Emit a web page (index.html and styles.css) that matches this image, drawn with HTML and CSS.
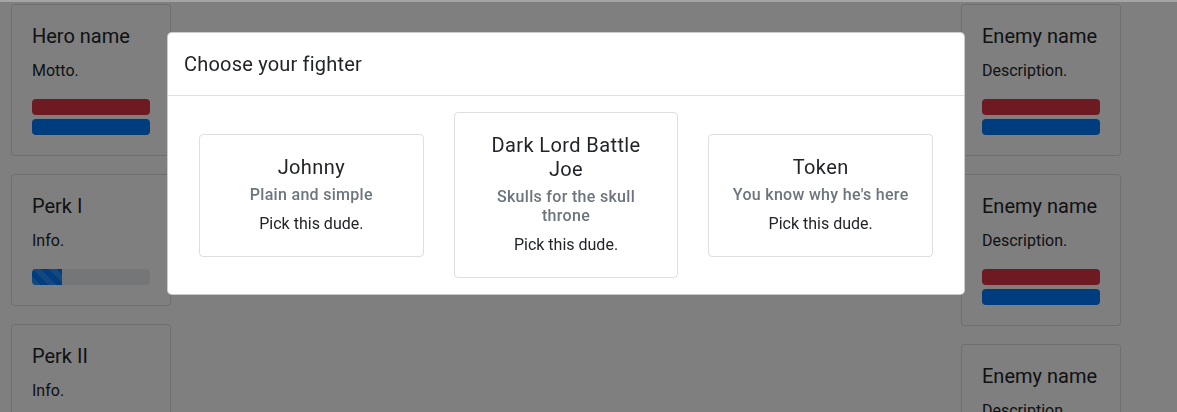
FILE: index.html
```html
<!DOCTYPE html>
<html lang="en">
<head>
<meta charset="utf-8">
<title>Choose your fighter</title>
<link rel="stylesheet" href="styles.css">
</head>
<body>
<div class="topline"></div>
<div class="page">
  <div class="side">
    <div class="card">
      <h5 class="card-title">Hero name</h5>
      <p class="card-text">Motto.</p>
      <div class="bar bar-red"></div>
      <div class="bar bar-blue"></div>
    </div>
    <div class="card">
      <h5 class="card-title">Perk I</h5>
      <p class="card-text">Info.</p>
      <div class="progress"><div class="progress-bar striped" style="width:25%"></div></div>
    </div>
    <div class="card">
      <h5 class="card-title">Perk II</h5>
      <p class="card-text">Info.</p>
      <div class="progress"><div class="progress-bar striped" style="width:25%"></div></div>
    </div>
  </div>
  <div class="middle"></div>
  <div class="side">
    <div class="card">
      <h5 class="card-title">Enemy name</h5>
      <p class="card-text">Description.</p>
      <div class="bar bar-red"></div>
      <div class="bar bar-blue"></div>
    </div>
    <div class="card">
      <h5 class="card-title">Enemy name</h5>
      <p class="card-text">Description.</p>
      <div class="bar bar-red"></div>
      <div class="bar bar-blue"></div>
    </div>
    <div class="card">
      <h5 class="card-title">Enemy name</h5>
      <p class="card-text">Description.</p>
      <div class="bar bar-red"></div>
      <div class="bar bar-blue"></div>
    </div>
  </div>
</div>
<div class="backdrop"></div>
<div class="modal">
  <div class="modal-header">
    <h5 class="modal-title">Choose your fighter</h5>
  </div>
  <div class="modal-body">
    <div class="fighter">
      <h5 class="fighter-title">Johnny</h5>
      <h6 class="fighter-sub">Plain and simple</h6>
      <p class="fighter-text">Pick this dude.</p>
    </div>
    <div class="fighter">
      <h5 class="fighter-title">Dark Lord Battle Joe</h5>
      <h6 class="fighter-sub">Skulls for the skull throne</h6>
      <p class="fighter-text">Pick this dude.</p>
    </div>
    <div class="fighter">
      <h5 class="fighter-title">Token</h5>
      <h6 class="fighter-sub">You know why he's here</h6>
      <p class="fighter-text">Pick this dude.</p>
    </div>
  </div>
</div>
</body>
</html>
```
FILE: styles.css
```css
html, body {
  margin: 0;
  height: 100%;
  overflow: hidden;
}
body {
  font-family: Roboto, "Liberation Sans", sans-serif;
  font-size: 16px;
  line-height: 1.5;
  color: #212529;
  background: #fff;
}
.topline {
  height: 2px;
  background: #a4a4a4;
  position: relative;
  z-index: 1060;
}
.page {
  display: grid;
  grid-template-columns: 160px 1fr 160px;
  padding: 2px 56px 0 11px;
}
.side {
  display: flex;
  flex-direction: column;
  gap: 18px;
}
.card {
  border: 1px solid rgba(0, 0, 0, 0.125);
  border-radius: 4px;
  padding: 20px;
  background: #fff;
}
.card-title {
  margin: 0 0 12px;
  font-size: 20px;
  font-weight: 400;
  line-height: 22px;
}
.card-text {
  margin: 0 0 16px;
}
.bar {
  height: 16px;
  border-radius: 4px;
}
.bar-red {
  background: #dc3545;
  margin-bottom: 4px;
}
.bar-blue {
  background: #007bff;
}
.progress {
  height: 16px;
  border-radius: 4px;
  background: #e9ecef;
  overflow: hidden;
  display: flex;
}
.progress-bar {
  background-color: #007bff;
}
.striped {
  background-image: linear-gradient(45deg, rgba(255,255,255,.15) 25%, transparent 25%, transparent 50%, rgba(255,255,255,.15) 50%, rgba(255,255,255,.15) 75%, transparent 75%, transparent);
  background-size: 16px 16px;
}
.backdrop {
  position: fixed;
  inset: 0;
  background: rgba(0, 0, 0, 0.5);
  z-index: 1040;
}
.modal {
  position: fixed;
  top: 32px;
  left: 167px;
  width: 798px;
  box-sizing: border-box;
  background: #fff;
  border: 1px solid rgba(0, 0, 0, 0.2);
  border-radius: 5px;
  z-index: 1050;
}
.modal-header {
  padding: 16px;
  border-bottom: 1px solid #dee2e6;
}
.modal-title {
  margin: 0;
  font-size: 20px;
  font-weight: 400;
  line-height: 30px;
  letter-spacing: 0.2px;
}
.modal-body {
  display: flex;
  align-items: center;
  gap: 30px;
  padding: 16px 31px;
}
.fighter {
  flex: 1;
  border: 1px solid rgba(0, 0, 0, 0.125);
  border-radius: 4px;
  padding: 20px;
  text-align: center;
}
.fighter-title {
  margin: 0 0 6px;
  font-size: 20px;
  font-weight: 400;
  line-height: 24px;
  letter-spacing: 0.4px;
}
.fighter-sub {
  margin: 0 0 8px;
  font-size: 16px;
  font-weight: 500;
  line-height: 19px;
  color: #6c757d;
  letter-spacing: 0.3px;
}
.fighter-text {
  margin: 0;
}
```
